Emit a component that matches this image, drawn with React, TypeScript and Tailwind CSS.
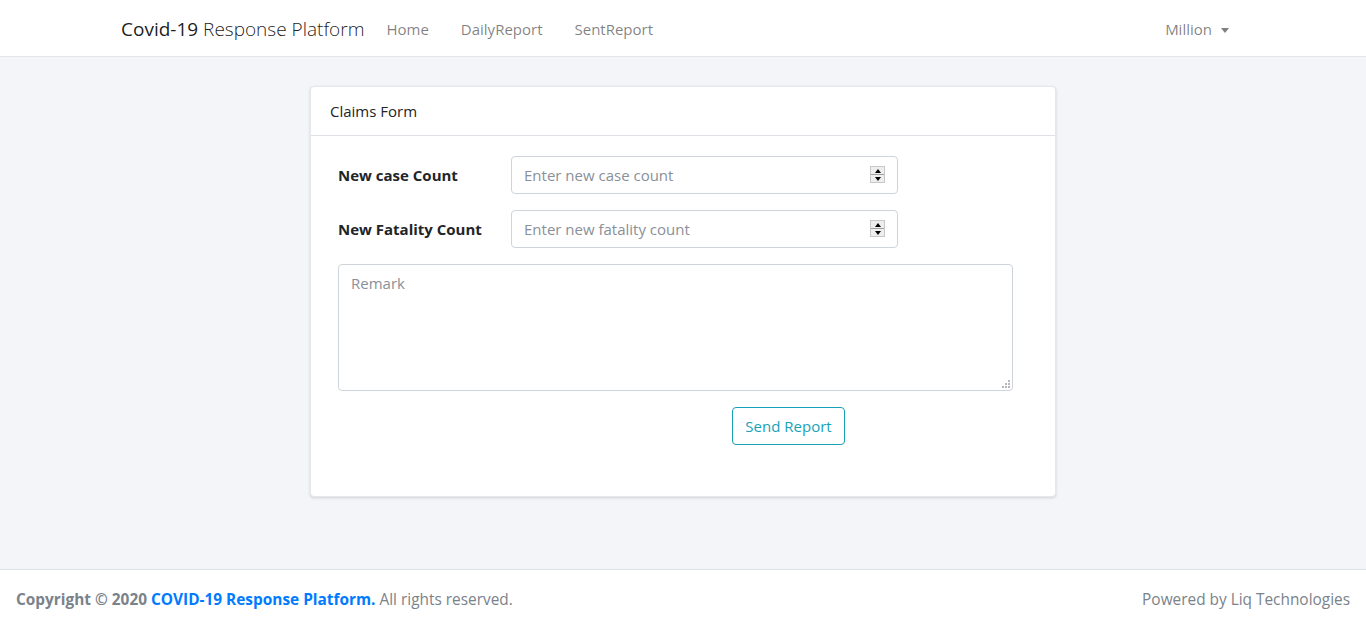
import React from "react";

function Spinner() {
  return (
    <div className="pointer-events-none absolute right-[13px] top-[10px] flex h-[17px] w-[15px] flex-col border border-[#c8c8c8] bg-[#eeeeee]">
      <div className="flex flex-1 items-center justify-center border-b border-[#a0a0a0]">
        <span className="block h-0 w-0 border-x-[3px] border-b-[4px] border-x-transparent border-b-black" />
      </div>
      <div className="flex flex-1 items-center justify-center">
        <span className="block h-0 w-0 border-x-[3px] border-t-[4px] border-x-transparent border-t-black" />
      </div>
    </div>
  );
}

function NumberField({ label, placeholder }: { label: string; placeholder: string }) {
  return (
    <div className="flex items-center">
      <label className="w-[173px] text-[15px] font-bold text-[#212529]">{label}</label>
      <div className="relative w-[387px]">
        <input
          type="text"
          placeholder={placeholder}
          className="h-[38px] w-full rounded-[4px] border border-[#ced4da] px-3 text-[15px] text-[#495057] placeholder-[#8a9099] outline-none"
        />
        <Spinner />
      </div>
    </div>
  );
}

function Grip() {
  return (
    <svg className="pointer-events-none absolute bottom-[3px] right-[3px]" width="8" height="8" viewBox="0 0 8 8">
      <rect x="6" y="0" width="2" height="2" fill="#b8b8b8" />
      <rect x="3" y="3" width="2" height="2" fill="#b8b8b8" />
      <rect x="6" y="3" width="2" height="2" fill="#b8b8b8" />
      <rect x="0" y="6" width="2" height="2" fill="#b8b8b8" />
      <rect x="3" y="6" width="2" height="2" fill="#b8b8b8" />
      <rect x="6" y="6" width="2" height="2" fill="#b8b8b8" />
    </svg>
  );
}

export default function App() {
  return (
    <div
      className="flex min-h-[626px] flex-col bg-[#f4f5f9]"
      style={{ fontFamily: '"Open Sans", "Noto Sans", sans-serif' }}
    >
      {/* Navbar */}
      <nav className="h-[57px] border-b border-[#e3e6ec] bg-white">
        <div className="mx-auto flex h-full max-w-[1140px] items-center px-2 pt-[3px]">
          <span className="mr-[14px] text-[19px] text-[rgba(0,0,0,0.9)]">
            Covid-19 <span className="font-light">Response Platform</span>
          </span>
          <a className="px-2 text-[15px] text-[rgba(0,0,0,0.5)]">Home</a>
          <a className="ml-[16px] px-2 text-[15px] text-[rgba(0,0,0,0.5)]">DailyReport</a>
          <a className="ml-[16px] px-2 text-[15px] text-[rgba(0,0,0,0.5)]">SentReport</a>
          <a className="ml-auto mr-[8px] flex items-center px-2 text-[15px] text-[rgba(0,0,0,0.5)]">
            Million
            <span className="ml-[9px] mt-[1px] block h-0 w-0 border-x-[4px] border-t-[5px] border-x-transparent border-t-[rgba(0,0,0,0.5)]" />
          </a>
        </div>
      </nav>

      {/* Main */}
      <main className="flex flex-1 justify-center pt-[29px]">
        <div className="h-[411px] w-[746px] rounded-[4px] border border-[#e5e7eb] bg-white shadow-[0_1px_3px_rgba(0,0,0,0.15)]">
          <div className="flex h-[49px] items-center border-b border-[#dee2e6] px-[19px] text-[15px] text-[#212529]">
            Claims Form
          </div>
          <div className="px-[27px] pt-[20px]">
            <div className="flex flex-col gap-[16px]">
              <NumberField label="New case Count" placeholder="Enter new case count" />
              <NumberField label="New Fatality Count" placeholder="Enter new fatality count" />
              <div className="relative w-[675px]">
                <textarea
                  placeholder="Remark"
                  className="block h-[127px] w-full resize-none rounded-[4px] border border-[#ced4da] px-3 py-[7px] text-[15px] text-[#495057] placeholder-[#8a9099] outline-none"
                />
                <Grip />
              </div>
            </div>
            <div className="mt-[16px] flex pl-[394px]">
              <button className="h-[38px] w-[113px] rounded-[4px] border border-[#17a2b8] text-[15px] text-[#17a2b8]">
                Send Report
              </button>
            </div>
          </div>
        </div>
      </main>

      {/* Footer */}
      <footer className="flex h-[57px] items-center justify-between border-t border-[#dee2e6] bg-white px-4 pt-[3px] text-[15.4px] text-[#7a828a]">
        <div>
          <span className="font-bold">Copyright © 2020 </span>
          <a className="font-bold text-[#007bff]">COVID-19 Response Platform.</a>
          <span> All rights reserved.</span>
        </div>
        <div>Powered by Liq Technologies</div>
      </footer>
    </div>
  );
}
